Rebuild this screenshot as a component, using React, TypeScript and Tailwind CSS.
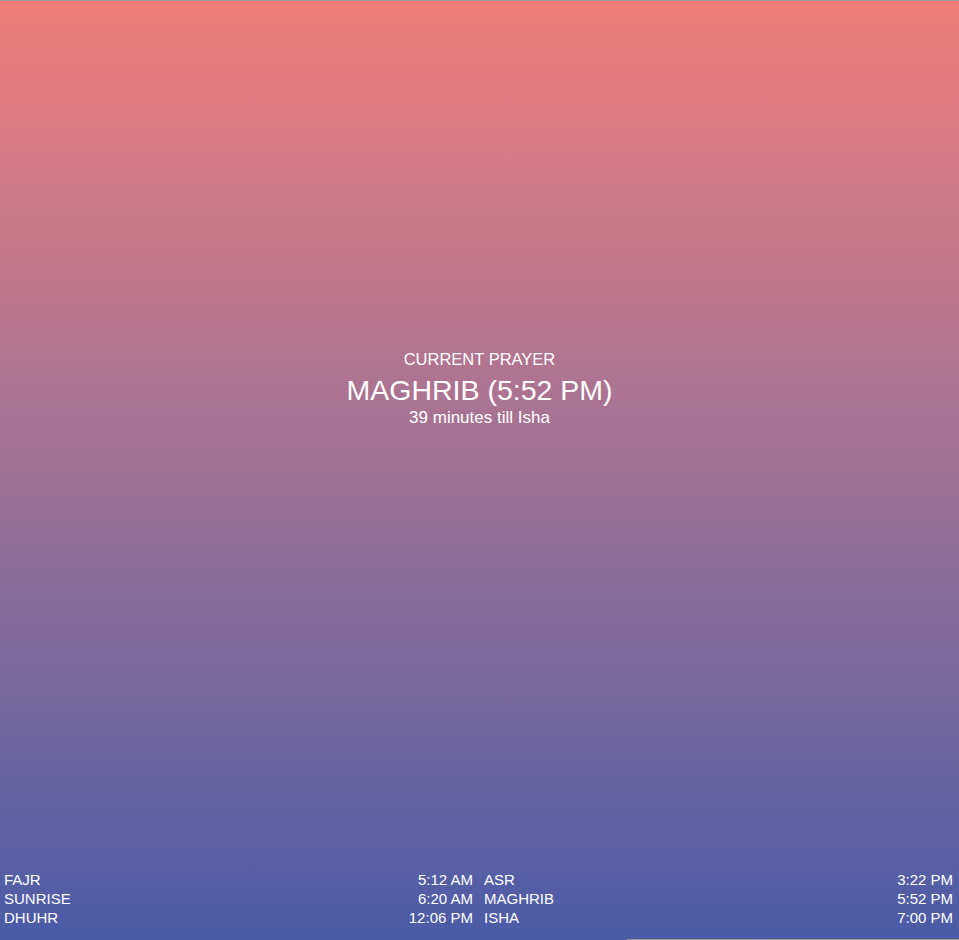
import React from "react";

const rows: [string, string, string, string][] = [
  ["FAJR", "5:12 AM", "ASR", "3:22 PM"],
  ["SUNRISE", "6:20 AM", "MAGHRIB", "5:52 PM"],
  ["DHUHR", "12:06 PM", "ISHA", "7:00 PM"],
];

export default function App() {
  return (
    <div
      className="w-[959px] h-[940px] bg-[#9a9a9a] flex flex-col text-white overflow-hidden"
      style={{ fontFamily: '"Liberation Sans", Arial, sans-serif' }}
    >
      <div className="mt-[1px] h-[938px] flex flex-col bg-gradient-to-b from-[#f07c79] to-[#4a5ba7]">
        <div className="flex-1 flex flex-col items-center pt-[349px]">
          <div className="text-[16.5px] leading-[19px]">CURRENT PRAYER</div>
          <div className="mt-[2px] text-[28.5px] leading-[38px]">MAGHRIB (5:52 PM)</div>
          <div className="text-[17px] leading-[18px]">39 minutes till Isha</div>
        </div>
        <div className="grid grid-cols-2 gap-x-[11px] pl-[4px] pr-[6px] pb-[12px] text-[15px] leading-[19px]">
          <div className="flex flex-col">
            {rows.map((r) => (
              <div key={r[0]} className="flex justify-between">
                <span>{r[0]}</span>
                <span>{r[1]}</span>
              </div>
            ))}
          </div>
          <div className="flex flex-col">
            {rows.map((r) => (
              <div key={r[2]} className="flex justify-between">
                <span>{r[2]}</span>
                <span>{r[3]}</span>
              </div>
            ))}
          </div>
        </div>
      </div>
      <div className="flex h-[1px]">
        <div className="w-[627px] bg-[#4a5ba7]" />
      </div>
    </div>
  );
}
